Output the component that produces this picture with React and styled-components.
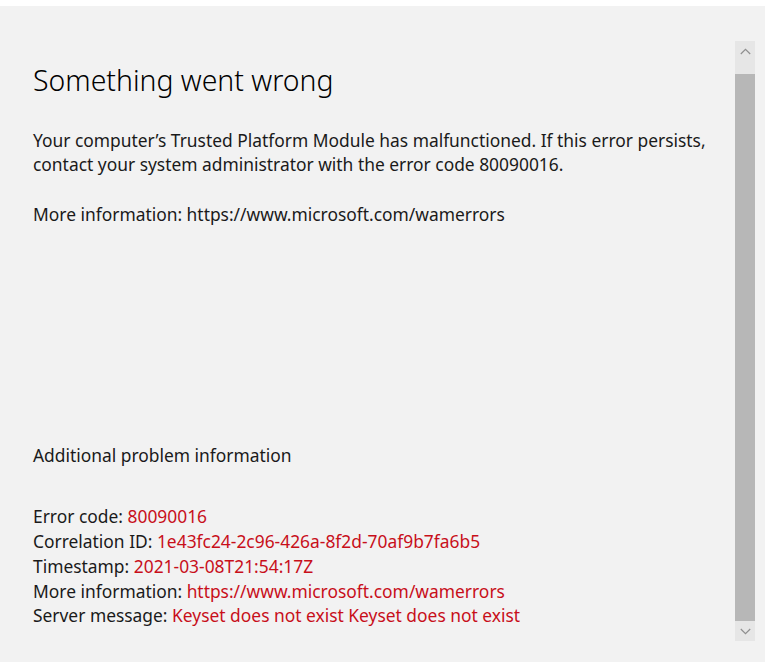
import React from 'react';
import styled, { createGlobalStyle } from 'styled-components';

const GlobalStyle = createGlobalStyle`
  html, body {
    margin: 0;
    padding: 0;
    background: #ffffff;
  }
  body {
    font-family: "Noto Sans", "Open Sans", Arial, sans-serif;
  }
`;

const Page = styled.div`
  padding-top: 6px;
  height: 662px;
  box-sizing: border-box;
`;

const Panel = styled.div`
  display: flex;
  height: 656px;
  background: #f2f2f2;
`;

const Content = styled.div`
  flex: 1;
  display: flex;
  flex-direction: column;
  padding: 56px 20px 34px 33px;
  color: #1a1a1a;
`;

const Title = styled.h1`
  margin: 0;
  font-size: 28.4px;
  line-height: 36px;
  font-weight: 300;
  color: #000;
`;

const Text = styled.p`
  margin: ${(p) => p.$top || 0}px 0 0;
  font-size: 17.4px;
  line-height: 24px;
`;

const Details = styled.div`
  margin-top: auto;
`;

const DetailList = styled.div`
  margin-top: 37px;
  font-size: 17.4px;
  line-height: 24.75px;
`;

const Row = styled.div`
  white-space: nowrap;
`;

const Value = styled.span`
  color: #c80f1a;
`;

// scroll bar on the right side of the window
const ScrollBar = styled.div`
  width: 20px;
  margin: 35px 10px 21px 0;
  display: flex;
  flex-direction: column;
  background: #e6e6e6;
`;

const Arrow = styled.div`
  height: 20px;
  display: flex;
  align-items: center;
  justify-content: center;
`;

const Track = styled.div`
  flex: 1;
  display: flex;
  padding-top: 13px;
`;

const Thumb = styled.div`
  flex: 1;
  background: #b7b7b7;
`;

function Chevron({ up }) {
  return (
    <svg width="11" height="7" viewBox="0 0 11 7">
      <path
        d={up ? 'M0.8 6 L5.5 1.3 L10.2 6' : 'M0.8 1 L5.5 5.7 L10.2 1'}
        fill="none"
        stroke="#8f8f8f"
        strokeWidth="1.2"
      />
    </svg>
  );
}

const details = [
  ['Error code:', '80090016'],
  ['Correlation ID:', '1e43fc24-2c96-426a-8f2d-70af9b7fa6b5'],
  ['Timestamp:', '2021-03-08T21:54:17Z'],
  ['More information:', 'https://www.microsoft.com/wamerrors'],
  ['Server message:', 'Keyset does not exist Keyset does not exist'],
];

export default function App() {
  return (
    <>
      <GlobalStyle />
      <Page>
        <Panel>
          <Content>
            <Title>Something went wrong</Title>
            <Text $top={30}>
              Your computer’s Trusted Platform Module has malfunctioned. If this error persists,
              contact your system administrator with the error code 80090016.
            </Text>
            <Text $top={26}>More information: https://www.microsoft.com/wamerrors</Text>
            <Details>
              <Text>Additional problem information</Text>
              <DetailList>
                {details.map(([label, value]) => (
                  <Row key={label}>
                    {label} <Value>{value}</Value>
                  </Row>
                ))}
              </DetailList>
            </Details>
          </Content>
          <ScrollBar>
            <Arrow>
              <Chevron up />
            </Arrow>
            <Track>
              <Thumb />
            </Track>
            <Arrow>
              <Chevron />
            </Arrow>
          </ScrollBar>
        </Panel>
      </Page>
    </>
  );
}
